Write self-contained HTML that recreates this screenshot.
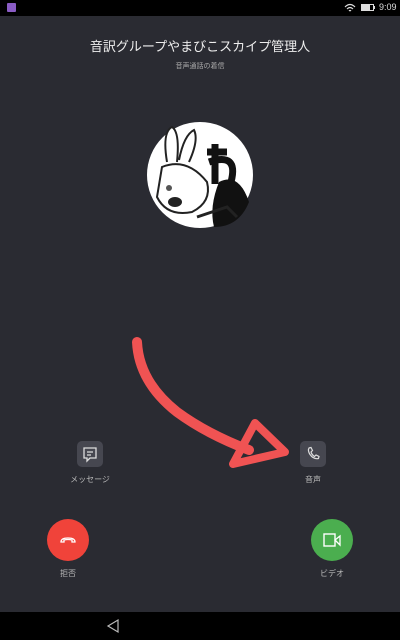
<!DOCTYPE html>
<html><head><meta charset="utf-8"><style>
body{margin:0;width:400px;height:640px;background:#2a2b32;position:relative;overflow:hidden;font-family:"Liberation Sans","Noto Sans CJK JP",sans-serif;color:#fff}
.sb{position:absolute;top:0;left:0;width:400px;height:16px;background:#000}
.nb{position:absolute;top:612px;left:0;width:400px;height:28px;background:#000}
.t{position:absolute;width:400px;text-align:center}
.sq{position:absolute;width:26px;height:26px;border-radius:5px;background:#464750}
.lb{position:absolute;font-size:8px;color:#bbb;text-align:center;width:80px}
.c{position:absolute;width:42px;height:42px;border-radius:50%}
</style></head><body>
<div class="sb">
<div style="position:absolute;left:7px;top:3px;width:9px;height:9px;background:#8a5cc4;border-radius:1px"></div>
<svg style="position:absolute;left:344px;top:3px" width="12" height="10" viewBox="0 0 12 10"><path d="M1 4Q6 -1 11 4M3 6Q6 3 9 6M5 8Q6 7 7 8" stroke="#ddd" stroke-width="1.2" fill="none"/></svg>
<div style="position:absolute;left:361px;top:4px;width:13px;height:7px;border:1px solid #ddd;box-sizing:border-box"><div style="width:8px;height:5px;background:#ddd"></div></div>
<div style="position:absolute;left:374px;top:6px;width:1px;height:3px;background:#ddd"></div>
<div style="position:absolute;left:379px;top:2px;font-size:9px;color:#ddd">9:09</div>
</div>
<div class="t" style="top:36px;font-size:13px;color:#eee">音訳グループやまびこスカイプ管理人</div>
<div class="t" style="top:61px;font-size:7px;color:#aaa">音声通話の着信</div>
<svg style="position:absolute;left:147px;top:122px" width="106" height="106" viewBox="0 0 106 106">
<circle cx="53" cy="53" r="53" fill="#fff"/>
<path d="M60 30h20M68 22v40M62 40q30 -10 22 20" stroke="#111" stroke-width="7" fill="none"/>
<path d="M72 60q20 -10 30 20q-10 25 -35 25q-5 -20 5 -45z" fill="#111"/>
<path d="M20 40q-5 -30 5 -35q8 5 5 35M32 38q5 -25 15 -30q5 10 -5 32" stroke="#222" stroke-width="2" fill="#fff"/>
<path d="M15 45q25 -10 45 15q5 20 -15 30q-25 5 -35 -15z" stroke="#222" stroke-width="2" fill="#fff"/>
<ellipse cx="28" cy="80" rx="7" ry="5" fill="#222"/>
<circle cx="22" cy="66" r="3" fill="#555"/>
<path d="M50 95l30 -10l10 10" stroke="#222" stroke-width="3" fill="none"/>
</svg>
<svg style="position:absolute;left:0;top:0" width="400" height="640">
<path d="M137 342q2 40 40 70q30 22 72 38" stroke="#f05353" stroke-width="10" fill="none" stroke-linecap="round"/>
<path d="M255 423l30 29l-52 12z" stroke="#f05353" stroke-width="8" fill="none" stroke-linejoin="round"/>
</svg>
<div class="sq" style="left:77px;top:441px"><svg width="26" height="26" viewBox="0 0 26 26"><path d="M7 7h12v10h-6l-3 3v-3h-3z" stroke="#ddd" stroke-width="1.3" fill="none"/><path d="M10 11h6M10 14h4" stroke="#ddd" stroke-width="1.2"/></svg></div>
<div class="lb" style="left:50px;top:474px">メッセージ</div>
<div class="sq" style="left:300px;top:441px"><svg width="26" height="26" viewBox="0 0 26 26"><path d="M9 7l2 -0.5l1.5 3l-1.5 1.5q1 3 3.5 4.5l1.5 -1.5l3 1.5l-0.5 2q-5 1 -8.5 -4q-2.5 -4 -1 -6.5z" stroke="#ddd" stroke-width="1.2" fill="none"/></svg></div>
<div class="lb" style="left:273px;top:474px">音声</div>
<div class="c" style="left:47px;top:519px;background:#f0433a"><svg width="42" height="42" viewBox="0 0 42 42"><path d="M14 23q0 -4 7 -4q7 0 7 4l-3 0l0 -2q-4 -1 -8 0l0 2z" stroke="#fff" stroke-width="1.3" fill="none"/></svg></div>
<div class="lb" style="left:28px;top:568px">拒否</div>
<div class="c" style="left:311px;top:519px;background:#4bae4f"><svg width="42" height="42" viewBox="0 0 42 42"><rect x="13" y="15" width="11" height="12" stroke="#fff" stroke-width="1.4" fill="none"/><path d="M24 21l5 -4v9z" stroke="#fff" stroke-width="1.3" fill="none"/></svg></div>
<div class="lb" style="left:292px;top:568px">ビデオ</div>
<div class="nb"><svg style="position:absolute;left:106px;top:6px" width="16" height="16" viewBox="0 0 16 16"><path d="M2 8l10 -6v12z" stroke="#bbb" stroke-width="1.2" fill="none"/></svg></div>
</body></html>
